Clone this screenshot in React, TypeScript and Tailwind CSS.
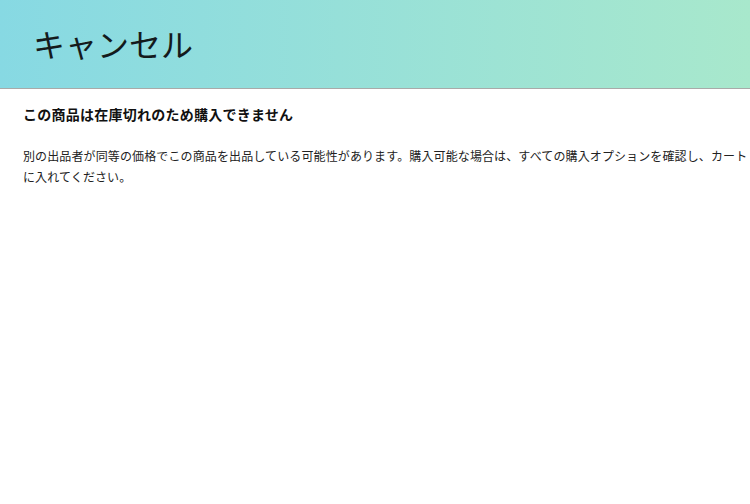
export default function App() {
  return (
    <div
      className="w-[750px] h-[504px] overflow-hidden bg-white text-[#111]"
      style={{ fontFamily: '"Noto Sans CJK JP", "Noto Sans", sans-serif' }}
    >
      {/* Header */}
      <header className="h-[89px] flex items-center pl-[33px] pb-[2px] bg-gradient-to-r from-[#87d9e3] to-[#a8e8cc] border-b border-[#a9aaa9]">
        <h1 className="text-[32px] leading-none font-normal text-[#141a1c]">キャンセル</h1>
      </header>

      {/* Body */}
      <section className="pl-[23px] pt-[15px]">
        <h2 className="text-[14px] leading-[20px] font-bold tracking-[0.25px] text-[#111]">
          この商品は在庫切れのため購入できません
        </h2>
        <p className="mt-[21px] text-[12px] leading-[21px] tracking-[0.12px] text-[#222] whitespace-nowrap">
          <span className="block">
            別の出品者が同等の価格でこの商品を出品している可能性があります。購入可能な場合は、すべての購入オプションを確認し、カート
          </span>
          <span className="block">に入れてください。</span>
        </p>
      </section>
    </div>
  );
}
